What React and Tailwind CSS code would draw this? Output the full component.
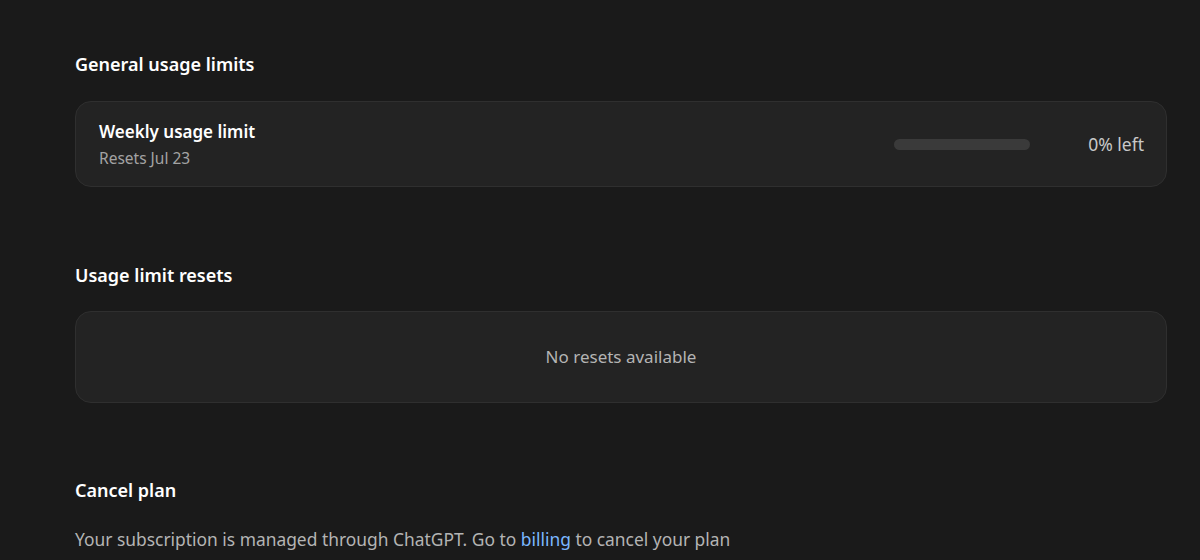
export default function App() {
  return (
    <div
      className="min-h-[560px] w-full bg-[#1a1a1a] pl-[75px] pr-[33px] pt-[50px]"
      style={{ fontFamily: '"Noto Sans", "Open Sans", sans-serif' }}
    >
      {/* General usage limits */}
      <section>
        <h2 className="text-[18px] leading-[28px] font-semibold text-white">
          General usage limits
        </h2>
        <div className="mt-[23px] flex h-[86px] items-center rounded-[16px] border border-[#2f2f2f] bg-[#232323] pl-[23px] pr-[22px]">
          <div className="flex-1 pt-[2px]">
            <div className="text-[17px] leading-[24px] font-semibold text-white">
              Weekly usage limit
            </div>
            <div className="mt-[2px] text-[15.5px] leading-[24px] text-[#a3a3a3]">
              Resets Jul 23
            </div>
          </div>
          <div className="h-[11px] w-[136px] rounded-full bg-[#3a3a3a]" />
          <div className="ml-[58px] text-[17.5px] text-[#c8c8c8]">0% left</div>
        </div>
      </section>

      {/* Usage limit resets */}
      <section className="mt-[74px]">
        <h2 className="text-[18px] leading-[28px] font-semibold text-white">
          Usage limit resets
        </h2>
        <div className="mt-[22px] flex h-[92px] items-center justify-center rounded-[16px] border border-[#2f2f2f] bg-[#232323]">
          <span className="text-[17px] text-[#b4b4b4]">No resets available</span>
        </div>
      </section>

      {/* Cancel plan */}
      <section className="mt-[73px]">
        <h2 className="text-[18px] leading-[28px] font-semibold text-white">
          Cancel plan
        </h2>
        <p className="mt-[21px] text-[17.4px] leading-[28px] text-[#b4b4b4]">
          Your subscription is managed through ChatGPT. Go to{" "}
          <a href="#" className="text-[#7ab7ff]">
            billing
          </a>{" "}
          to cancel your plan
        </p>
      </section>
    </div>
  );
}
